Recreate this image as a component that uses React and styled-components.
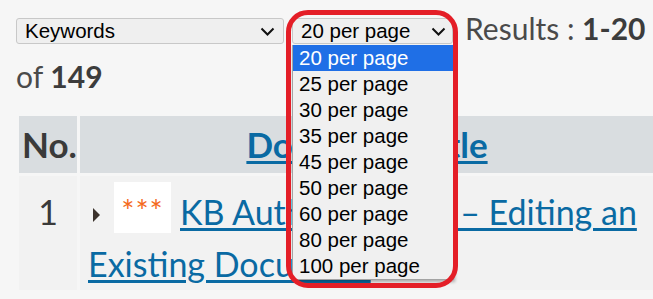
import React from "react";
import styled, { createGlobalStyle } from "styled-components";

const Global = createGlobalStyle`
  html, body { margin: 0; padding: 0; background: #f6f6f6; overflow: hidden; }
  body { font-family: Lato, "Noto Sans", sans-serif; }
`;

const Page = styled.div`
  width: 653px;
  height: 299px;
  overflow: hidden;
`;

const Toolbar = styled.div`
  padding: 4px 0 0 16px;
  font-size: 30px;
  line-height: 48px;
  color: #4a4a4a;
`;

const SelectBox = styled.div`
  display: inline-flex;
  align-items: center;
  justify-content: space-between;
  box-sizing: border-box;
  vertical-align: top;
  margin-top: 14px;
  width: ${(p) => p.$w}px;
  height: 26px;
  padding: 0 ${(p) => p.$pr}px 0 8px;
  border: 1px solid #c8c8c8;
  border-radius: 3px;
  background: #efefef;
  font-family: "Liberation Sans", Arial, sans-serif;
  font-size: 20.5px;
  line-height: 24px;
  color: #000;
`;

const Wrap = styled.span`
  position: relative;
  display: inline-block;
  vertical-align: top;
  margin-left: 8px;
  margin-right: 12px;
`;

const List = styled.div`
  position: absolute;
  z-index: 10;
  top: 41px;
  left: 0;
  width: 162px;
  box-sizing: border-box;
  background: #f0f0f0;
  border: 1px solid #a3a3a3;
  border-top: none;
  box-shadow: 1px 2px 3px rgba(0, 0, 0, 0.3);
  font-family: "Liberation Sans", Arial, sans-serif;
  font-size: 20.5px;
  line-height: 26px;
  color: #000;
`;

const Option = styled.div`
  height: 26px;
  padding-left: 6px;
  background: ${(p) => (p.$active ? "#1f6fe6" : "transparent")};
  color: ${(p) => (p.$active ? "#fff" : "#000")};
  white-space: nowrap;
`;

const Ring = styled.div`
  position: absolute;
  z-index: 11;
  left: -6px;
  top: 6px;
  width: 172px;
  height: 278px;
  box-sizing: border-box;
  border: 5px solid #e41e27;
  border-radius: 22px;
  pointer-events: none;
`;

const Strong = styled.b`
  font-weight: 700;
  color: #3c3c3c;
`;

const Table = styled.table`
  margin: 13px 0 0 16px;
  border-spacing: 3px;
  table-layout: fixed;
  width: 641px;
  font-size: 34px;
`;

const Th = styled.th`
  width: ${(p) => (p.$w ? `${p.$w - 6}px` : "auto")};
  height: 57px;
  padding: 0 3px;
  background: #d9dde0;
  color: #3a3a3a;
  font-size: 35px;
  font-weight: 700;
  line-height: 57px;
  text-align: ${(p) => p.$align || "left"};
`;

const Td = styled.td`
  vertical-align: top;
  padding: 10px 8px 0 8px;
  background: #f2f2f2;
  color: #3a3a3a;
  line-height: 52px;
  text-align: ${(p) => p.$align || "left"};
`;

const Link = styled.a`
  color: #0a6aa3;
  text-decoration: underline;
  text-decoration-thickness: 3px;
  text-underline-offset: 3px;
  cursor: pointer;
`;

const Caret = styled.span`
  display: inline-block;
  width: 0;
  height: 0;
  margin-left: 5px;
  vertical-align: 3px;
  border-left: 7px solid #3b322c;
  border-top: 7px solid transparent;
  border-bottom: 7px solid transparent;
`;

const Stars = styled.span`
  display: inline-flex;
  justify-content: center;
  align-items: center;
  vertical-align: top;
  margin: -4px 9px 0 14px;
  width: 57px;
  height: 51px;
  background: #fff;
  color: #f46a1c;
  font-size: 31px;
  letter-spacing: 1px;
  line-height: 51px;
  padding-top: 6px;
  box-sizing: border-box;
`;

const Chevron = () => (
  <svg width="15" height="9" viewBox="0 0 15 9" fill="none">
    <path d="M1.5 1.5 L7.5 7.5 L13.5 1.5" stroke="#111" strokeWidth="2" />
  </svg>
);

const options = [20, 25, 30, 35, 45, 50, 60, 80, 100];

export default function App() {
  return (
    <Page>
      <Global />
      <Toolbar>
        <SelectBox $w={268} $pr={8}>
          Keywords
          <Chevron />
        </SelectBox>
        <Wrap>
          <SelectBox $w={161} $pr={6}>
            20 per page
            <Chevron />
          </SelectBox>
          <List>
            {options.map((n, i) => (
              <Option key={n} $active={i === 0}>
                {n} per page
              </Option>
            ))}
          </List>
          <Ring />
        </Wrap>
        Results : <Strong>1-20</Strong> of <Strong>149</Strong>
      </Toolbar>
      <Table>
        <thead>
          <tr>
            <Th $w={58}>No.</Th>
            <Th $align="center">
              <Link>Document Title</Link>
            </Th>
          </tr>
        </thead>
        <tbody>
          <tr>
            <Td $align="center">1</Td>
            <Td>
              <Caret />
              <Stars>***</Stars>
              <Link>KB Authoring Tool – Editing an Existing Document</Link>
            </Td>
          </tr>
        </tbody>
      </Table>
    </Page>
  );
}
